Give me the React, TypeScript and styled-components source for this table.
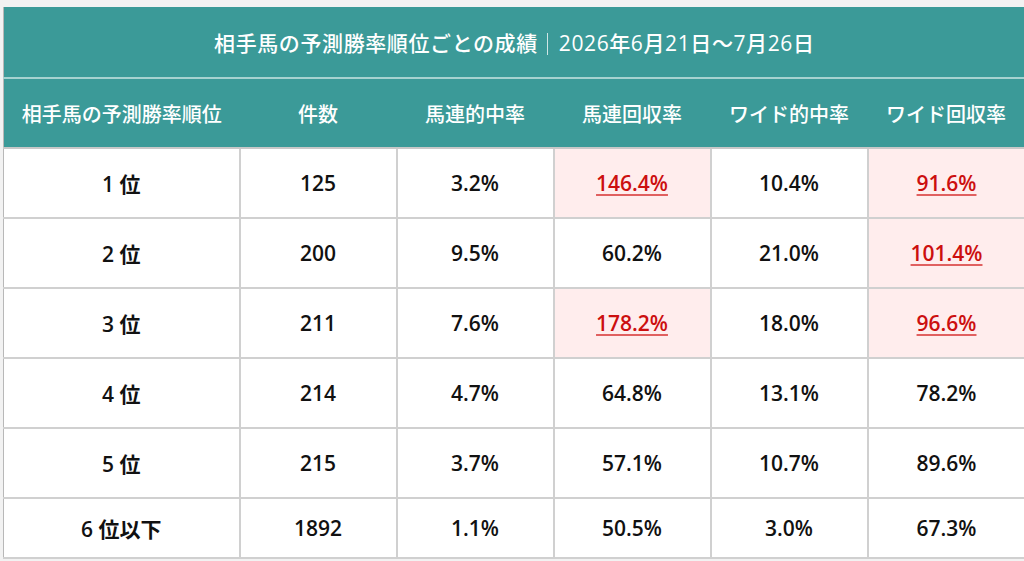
import React from "react";
import styled, { createGlobalStyle } from "styled-components";

interface Row {
  rank: string;
  count: string;
  umarenHit: string;
  umarenReturn: string;
  wideHit: string;
  wideReturn: string;
  umarenGood?: boolean;
  wideGood?: boolean;
}

const rows: Row[] = [
  { rank: "1位", count: "125", umarenHit: "3.2%", umarenReturn: "146.4%", wideHit: "10.4%", wideReturn: "91.6%", umarenGood: true, wideGood: true },
  { rank: "2位", count: "200", umarenHit: "9.5%", umarenReturn: "60.2%", wideHit: "21.0%", wideReturn: "101.4%", wideGood: true },
  { rank: "3位", count: "211", umarenHit: "7.6%", umarenReturn: "178.2%", wideHit: "18.0%", wideReturn: "96.6%", umarenGood: true, wideGood: true },
  { rank: "4位", count: "214", umarenHit: "4.7%", umarenReturn: "64.8%", wideHit: "13.1%", wideReturn: "78.2%" },
  { rank: "5位", count: "215", umarenHit: "3.7%", umarenReturn: "57.1%", wideHit: "10.7%", wideReturn: "89.6%" },
  { rank: "6位以下", count: "1892", umarenHit: "1.1%", umarenReturn: "50.5%", wideHit: "3.0%", wideReturn: "67.3%" },
];

const headers = ["相手馬の予測勝率順位", "件数", "馬連的中率", "馬連回収率", "ワイド的中率", "ワイド回収率"];

const GlobalStyle = createGlobalStyle`
  html, body {
    margin: 0;
    padding: 0;
    background: #f2f2f2;
    overflow: hidden;
  }
  body {
    font-family: "Open Sans", "Noto Sans CJK JP", sans-serif;
  }
`;

const Wrapper = styled.div`
  padding: 7px 0 0 3px;
`;

const Table = styled.table`
  width: 1021px;
  border-collapse: collapse;
  table-layout: fixed;
  background: #ffffff;
  border-left: 1px solid #b8b8b8;
`;

const TitleCell = styled.th`
  height: 70px;
  padding: 0;
  background: #3b9a98;
  color: #ffffff;
  font-size: 21px;
  font-weight: 500;
  letter-spacing: 0.6px;
  text-align: center;
  border-bottom: 2px solid #a6d2d0;
`;

const Divider = styled.span`
  display: inline-block;
  width: 1px;
  height: 22px;
  margin: 0 11px 0 9px;
  background: #cfe6e5;
  vertical-align: -4px;
`;

const HeadCell = styled.th`
  height: 68px;
  padding: 0;
  background: #3b9a98;
  color: #ffffff;
  font-size: 20px;
  font-weight: 500;
  text-align: center;
  border-bottom: 2px solid #c8c8c8;
`;

const BodyRow = styled.tr<{ $last?: boolean }>`
  height: ${(p) => (p.$last ? "60px" : "70px")};
`;

const Cell = styled.td<{ $good?: boolean }>`
  padding: 0;
  text-align: center;
  font-size: 21px;
  font-weight: 600;
  color: #111111;
  background: ${(p) => (p.$good ? "#ffeded" : "#ffffff")};
  border: 2px solid #d0d0d0;
  border-top: none;
  &:first-child {
    border-left: none;
  }
  &:last-child {
    border-right: none;
  }
`;

const GoodValue = styled.span`
  color: #cc0f0f;
  text-decoration: underline;
  text-decoration-color: #e06060;
  text-decoration-thickness: 1.5px;
  text-underline-offset: 3px;
`;

const Value: React.FC<{ good?: boolean; children: React.ReactNode }> = ({ good, children }) =>
  good ? <GoodValue>{children}</GoodValue> : <>{children}</>;

const App: React.FC = () => (
  <>
    <GlobalStyle />
    <Wrapper>
      <Table>
        <colgroup>
          <col style={{ width: 236 }} />
          <col style={{ width: 157 }} />
          <col style={{ width: 157 }} />
          <col style={{ width: 157 }} />
          <col style={{ width: 157 }} />
          <col style={{ width: 157 }} />
        </colgroup>
        <thead>
          <tr>
            <TitleCell colSpan={6}>
              相手馬の予測勝率順位ごとの成績<Divider />2026年6月21日～7月26日
            </TitleCell>
          </tr>
          <tr>
            {headers.map((h) => (
              <HeadCell key={h}>{h}</HeadCell>
            ))}
          </tr>
        </thead>
        <tbody>
          {rows.map((r, i) => (
            <BodyRow key={r.rank} $last={i === rows.length - 1}>
              <Cell>{r.rank.replace("位", " 位")}</Cell>
              <Cell>{r.count}</Cell>
              <Cell>{r.umarenHit}</Cell>
              <Cell $good={r.umarenGood}>
                <Value good={r.umarenGood}>{r.umarenReturn}</Value>
              </Cell>
              <Cell>{r.wideHit}</Cell>
              <Cell $good={r.wideGood}>
                <Value good={r.wideGood}>{r.wideReturn}</Value>
              </Cell>
            </BodyRow>
          ))}
        </tbody>
      </Table>
    </Wrapper>
  </>
);

export default App;
